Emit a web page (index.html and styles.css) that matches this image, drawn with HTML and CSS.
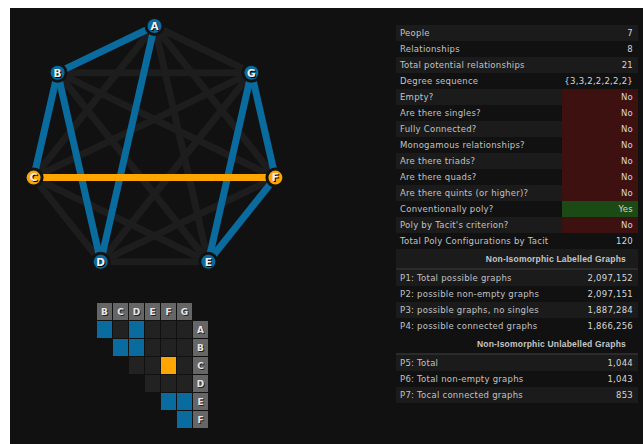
FILE: index.html
```html
<!DOCTYPE html>
<html lang="en">
<head>
<meta charset="utf-8">
<title>Poly Graph Explorer</title>
<link rel="stylesheet" href="styles.css">
</head>
<body>
<div class="panel">
  <div class="left">
    <svg class="graph" width="300" height="285" viewBox="0 0 300 285">
      <g class="edges-idle">
        <line x1="144.5" y1="18" x2="23.6" y2="169.6"/>
        <line x1="144.5" y1="18" x2="198.3" y2="253.7"/>
        <line x1="144.5" y1="18" x2="265.4" y2="169.6"/>
        <line x1="144.5" y1="18" x2="241.4" y2="64.7"/>
        <line x1="47.6" y1="64.7" x2="198.3" y2="253.7"/>
        <line x1="47.6" y1="64.7" x2="265.4" y2="169.6"/>
        <line x1="47.6" y1="64.7" x2="241.4" y2="64.7"/>
        <line x1="23.6" y1="169.6" x2="90.7" y2="253.7"/>
        <line x1="23.6" y1="169.6" x2="198.3" y2="253.7"/>
        <line x1="23.6" y1="169.6" x2="241.4" y2="64.7"/>
        <line x1="90.7" y1="253.7" x2="198.3" y2="253.7"/>
        <line x1="90.7" y1="253.7" x2="265.4" y2="169.6"/>
        <line x1="90.7" y1="253.7" x2="241.4" y2="64.7"/>
      </g>
      <g class="edges-on">
        <line x1="144.5" y1="18" x2="47.6" y2="64.7"/>
        <line x1="144.5" y1="18" x2="90.7" y2="253.7"/>
        <line x1="47.6" y1="64.7" x2="23.6" y2="169.6"/>
        <line x1="47.6" y1="64.7" x2="90.7" y2="253.7"/>
        <line x1="198.3" y1="253.7" x2="265.4" y2="169.6"/>
        <line x1="198.3" y1="253.7" x2="241.4" y2="64.7"/>
        <line x1="265.4" y1="169.6" x2="241.4" y2="64.7"/>
      </g>
      <g class="edges-picked">
        <line x1="23.6" y1="169.6" x2="265.4" y2="169.6"/>
      </g>
      <g class="nodes">
        <circle class="node" cx="144.5" cy="18" r="8.5"/>
        <circle class="node" cx="47.6" cy="64.7" r="8.5"/>
        <circle class="node picked" cx="23.6" cy="169.6" r="8.5"/>
        <circle class="node" cx="90.7" cy="253.7" r="8.5"/>
        <circle class="node" cx="198.3" cy="253.7" r="8.5"/>
        <circle class="node picked" cx="265.4" cy="169.6" r="8.5"/>
        <circle class="node" cx="241.4" cy="64.7" r="8.5"/>
      </g>
      <g class="labels">
        <text x="144.5" y="21.8">A</text>
        <text x="47.6" y="68.5">B</text>
        <text x="23.6" y="173.4">C</text>
        <text x="90.7" y="257.5">D</text>
        <text x="198.3" y="257.5">E</text>
        <text x="265.4" y="173.4">F</text>
        <text x="241.4" y="68.5">G</text>
      </g>
    </svg>

    <div class="matrix">
      <div class="hd">B</div><div class="hd">C</div><div class="hd">D</div><div class="hd">E</div><div class="hd">F</div><div class="hd">G</div><div class="blank"></div>

      <div class="cell on"></div><div class="cell"></div><div class="cell on"></div><div class="cell"></div><div class="cell"></div><div class="cell"></div><div class="hd">A</div>

      <div class="blank"></div><div class="cell on"></div><div class="cell on"></div><div class="cell"></div><div class="cell"></div><div class="cell"></div><div class="hd">B</div>

      <div class="blank"></div><div class="blank"></div><div class="cell"></div><div class="cell"></div><div class="cell picked"></div><div class="cell"></div><div class="hd">C</div>

      <div class="blank"></div><div class="blank"></div><div class="blank"></div><div class="cell"></div><div class="cell"></div><div class="cell"></div><div class="hd">D</div>

      <div class="blank"></div><div class="blank"></div><div class="blank"></div><div class="blank"></div><div class="cell on"></div><div class="cell on"></div><div class="hd">E</div>

      <div class="blank"></div><div class="blank"></div><div class="blank"></div><div class="blank"></div><div class="blank"></div><div class="cell on"></div><div class="hd">F</div>
    </div>
  </div>

  <div class="right">
    <table class="stats">
      <tbody>
        <tr class="lt"><td>People</td><td class="val">7</td></tr>
        <tr><td>Relationships</td><td class="val">8</td></tr>
        <tr class="lt"><td>Total potential relationships</td><td class="val">21</td></tr>
        <tr><td>Degree sequence</td><td class="val">{3,3,2,2,2,2,2}</td></tr>
        <tr class="lt"><td>Empty?</td><td class="val no">No</td></tr>
        <tr><td>Are there singles?</td><td class="val no">No</td></tr>
        <tr class="lt"><td>Fully Connected?</td><td class="val no">No</td></tr>
        <tr><td>Monogamous relationships?</td><td class="val no">No</td></tr>
        <tr class="lt"><td>Are there triads?</td><td class="val no">No</td></tr>
        <tr><td>Are there quads?</td><td class="val no">No</td></tr>
        <tr class="lt"><td>Are there quints (or higher)?</td><td class="val no">No</td></tr>
        <tr><td>Conventionally poly?</td><td class="val yes">Yes</td></tr>
        <tr class="lt"><td>Poly by Tacit's criterion?</td><td class="val no">No</td></tr>
        <tr><td>Total Poly Configurations by Tacit</td><td class="val">120</td></tr>
        <tr class="lt head"><th colspan="2">Non-Isomorphic Labelled Graphs</th></tr>
        <tr class="lt"><td>P1: Total possible graphs</td><td class="val">2,097,152</td></tr>
        <tr><td>P2: possible non-empty graphs</td><td class="val">2,097,151</td></tr>
        <tr class="lt"><td>P3: possible graphs, no singles</td><td class="val">1,887,284</td></tr>
        <tr><td>P4: possible connected graphs</td><td class="val">1,866,256</td></tr>
        <tr class="head"><th colspan="2">Non-Isomorphic Unlabelled Graphs</th></tr>
        <tr class="lt"><td>P5: Total</td><td class="val">1,044</td></tr>
        <tr><td>P6: Total non-empty graphs</td><td class="val">1,043</td></tr>
        <tr class="lt"><td>P7: Tocal connected graphs</td><td class="val">853</td></tr>
      </tbody>
    </table>
  </div>
</div>
</body>
</html>
```
FILE: styles.css
```css
html, body {
  background: #ffffff;
}

body {
  margin: 8px 0 0 10px;
  font-family: "DejaVu Sans", "Liberation Sans", sans-serif;
  overflow: hidden;
}

.panel {
  display: flex;
  background: #111111;
  width: 633px;
  height: 436px;
}

.left {
  width: 386px;
  display: flex;
  flex-direction: column;
}

.graph {
  display: block;
}

.edges-idle line {
  stroke: #1d1d1d;
  stroke-width: 7;
}

.edges-on line {
  stroke: #0a6c9e;
  stroke-width: 7;
}

.edges-picked line {
  stroke: #ffa500;
  stroke-width: 7;
}

.node {
  fill: #0a6c9e;
  stroke: #121212;
  stroke-width: 3;
}

.node.picked {
  fill: #ffa500;
}

.labels text {
  font-family: "DejaVu Sans", sans-serif;
  font-size: 10.5px;
  font-weight: bold;
  fill: #f4f4f4;
  text-anchor: middle;
  text-shadow: 1px 1px 0 #000;
}

/* adjacency matrix */
.matrix {
  display: grid;
  grid-template-columns: repeat(7, 15px);
  grid-auto-rows: 17px;
  gap: 1px;
  margin: 10px 0 0 87px;
}

.matrix .hd {
  background: #666666;
  color: #e6e6e6;
  font-size: 9px;
  font-weight: bold;
  display: flex;
  align-items: center;
  justify-content: center;
  text-shadow: 1px 1px 0 #222;
}

.matrix .cell {
  background: #222222;
}

.matrix .cell.on {
  background: #0a6c9e;
}

.matrix .cell.picked {
  background: #ffa500;
}

/* statistics table */
.right {
  padding-top: 17px;
}

.stats {
  width: 242px;
  border-collapse: collapse;
  font-size: 8.5px;
  letter-spacing: 0.25px;
  color: #c2c2c2;
}

.stats td {
  height: 16px;
  padding: 0 0 0 4px;
  white-space: nowrap;
  vertical-align: middle;
}

.stats tr.lt {
  background: #1b1b1b;
}

.stats td.val {
  width: 71px;
  padding: 0 5px 0 0;
  text-align: right;
  color: #d6d6d6;
}

.stats td.no {
  background: #3e1111;
}

.stats td.yes {
  background: #1b4a15;
}

.stats tr.head th {
  height: 19px;
  padding: 0 12px 0 0;
  text-align: right;
  font-family: "Liberation Sans", sans-serif;
  font-size: 8.5px;
  font-weight: bold;
  color: #c6c6c6;
  letter-spacing: 0.2px;
  border-bottom: 2px solid #2b2b2b;
}
```
